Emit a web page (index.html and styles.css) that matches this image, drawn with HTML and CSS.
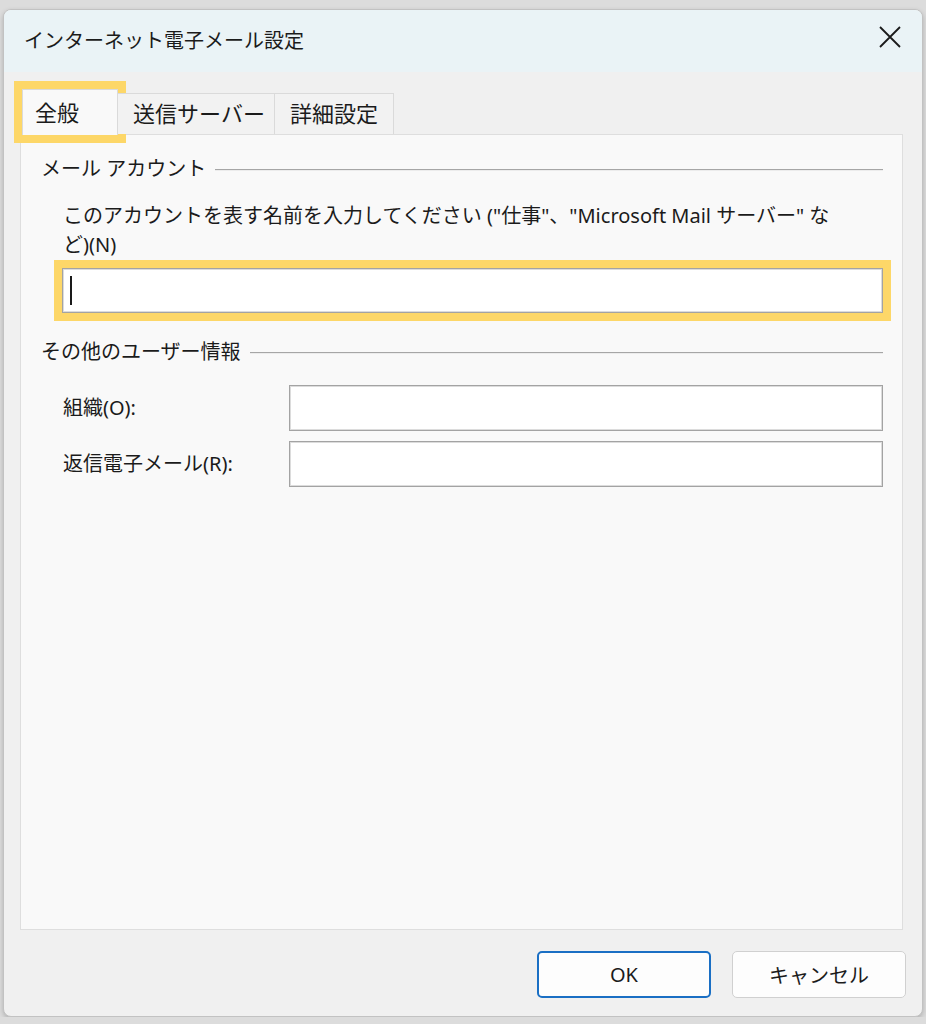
FILE: index.html
```html
<!DOCTYPE html>
<html lang="ja">
<head>
<meta charset="utf-8">
<title>インターネット電子メール設定</title>
<link rel="stylesheet" href="styles.css">
</head>
<body>
<div class="window">
  <div class="titlebar">
    <span class="title">インターネット電子メール設定</span>
    <span class="close">
      <svg width="24" height="24" viewBox="0 0 24 24"><path d="M2 2 L22 22 M22 2 L2 22" stroke="#1a1a1a" stroke-width="1.8" fill="none"/></svg>
    </span>
  </div>
  <div class="tabs">
    <div class="tab tab-active">全般</div>
    <div class="tab tab-send">送信サーバー</div>
    <div class="tab tab-detail">詳細設定</div>
  </div>
  <div class="panel">
    <div class="group-head"><span>メール アカウント</span><span class="rule"></span></div>
    <p class="desc">このアカウントを表す名前を入力してください ("仕事"、"Microsoft Mail サーバー" など)(N)</p>
    <div class="name-input"><span class="caret"></span></div>
    <div class="group-head group-two"><span>その他のユーザー情報</span><span class="rule"></span></div>
    <div class="form-grid">
      <span class="label">組織(O):</span>
      <div class="field"></div>
      <span class="label">返信電子メール(R):</span>
      <div class="field"></div>
    </div>
  </div>
  <div class="footer">
    <button class="btn btn-ok">OK</button>
    <button class="btn">キャンセル</button>
  </div>
</div>
</body>
</html>
```

FILE: styles.css
```css
* { box-sizing: border-box; }
html, body { margin: 0; }
body {
  background: #dcdcdc;
  padding: 9px 3px 0 3px;
  font-family: "Noto Sans", "Noto Sans CJK JP", sans-serif;
  color: #1b1b1b;
}
.window {
  width: 920px;
  height: 1008px;
  border: 1px solid #c2c2c2;
  border-radius: 8px;
  background: #f0f0f0;
  overflow: hidden;
  display: flex;
  flex-direction: column;
  box-shadow: 0 2px 5px rgba(0,0,0,0.2);
}
.titlebar {
  height: 62px;
  flex: none;
  background: #eaf3f6;
  display: flex;
  align-items: center;
  justify-content: space-between;
  padding: 0 20px 0 20px;
}
.title { font-size: 20px; line-height: 28px; }
.close { display: flex; width: 24px; height: 24px; margin-top: -8px; }
.tabs {
  flex: none;
  display: flex;
  align-items: flex-end;
  margin-top: 17px;
  padding-left: 18px;
  height: 45px;
  position: relative;
  z-index: 1;
}
.tab {
  height: 41px;
  border: 1px solid #dadada;
  border-bottom: none;
  background: #f2f2f2;
  font-size: 22px;
  line-height: 39px;
  text-align: center;
}
.tab-active {
  width: 96px;
  height: 46px;
  margin-bottom: -1px;
  background: #f9f9f9;
  text-align: left;
  padding-left: 12px;
  line-height: 44px;
  outline: 8px solid #fdd768;
}
.tab-send { width: 157px; border-left: none; padding-left: 6px; }
.tab-detail { width: 119px; border-left: none; }
.panel {
  flex: 1;
  margin: 0 19px 0 16px;
  background: #f9f9f9;
  border: 1px solid #dedede;
  padding: 20px 19px 0 20px;
}
.group-head {
  display: flex;
  align-items: center;
  font-size: 20px;
  line-height: 28px;
  gap: 9px;
}
.rule {
  flex: 1;
  height: 2px;
  border-top: 1px solid #a6a6a6;
  border-bottom: 1px solid #ececec;
  margin-top: 1px;
}
.desc {
  margin: 18px 0 0 22px;
  max-width: 772px;
  font-size: 20px;
  line-height: 29px;
}
.name-input {
  margin: 9px 0 0 21px;
  height: 45px;
  background: #fff;
  border: 1px solid #a3a3a3;
  box-shadow: inset 0 0 0 1px #dcdcdc;
  outline: 8px solid #fdd768;
  display: flex;
  align-items: center;
}
.caret {
  width: 2px;
  height: 29px;
  background: #1a1a1a;
  margin-left: 7px;
}
.group-two { margin-top: 25px; }
.form-grid {
  margin: 19px 0 0 22px;
  display: grid;
  grid-template-columns: 226px 1fr;
  row-gap: 10px;
  align-items: center;
}
.label { font-size: 20px; line-height: 28px; }
.field {
  height: 46px;
  background: #fff;
  border: 1px solid #a3a3a3;
  box-shadow: inset 0 0 0 1px #dcdcdc;
}
.footer {
  flex: none;
  height: 86px;
  display: flex;
  justify-content: flex-end;
  gap: 21px;
  padding: 21px 16px 0 0;
}
.btn {
  width: 174px;
  height: 47px;
  background: #fdfdfd;
  border: 1px solid #d0d0d0;
  border-radius: 5px;
  font-family: inherit;
  font-size: 20px;
  color: #1b1b1b;
  padding: 0;
}
.btn-ok { border: 2px solid #1a6fc4; }
```
